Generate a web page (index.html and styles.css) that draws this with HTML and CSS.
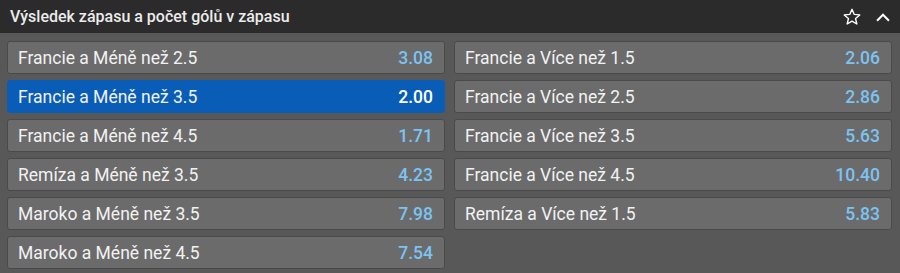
FILE: index.html
```html
<!DOCTYPE html>
<html lang="cs">
<head>
  <meta charset="UTF-8">
  <title>Výsledek zápasu a počet gólů v zápasu</title>
  <link rel="stylesheet" href="styles.css">
</head>
<body>
  <div class="market">
    <div class="market-header">
      <span class="market-title">Výsledek zápasu a počet gólů v zápasu</span>
      <div class="market-icons">
        <svg class="icon" width="20" height="20" viewBox="0 0 24 24">
          <path d="M12 2.8l2.7 6.1 6.6.6-5 4.4 1.5 6.5L12 17l-5.8 3.4 1.5-6.5-5-4.4 6.6-.6z" fill="none" stroke="#fff" stroke-width="1.7" stroke-linejoin="round"/>
        </svg>
        <svg class="icon" width="18" height="18" viewBox="0 0 24 24">
          <path d="M5 16l7-7 7 7" fill="none" stroke="#fff" stroke-width="2.6" stroke-linecap="square"/>
        </svg>
      </div>
    </div>

    <div class="market-body">
      <div class="odds-column">
        <div class="odd"><span class="odd-name">Francie a Méně než 2.5</span><span class="odd-value">3.08</span></div>
        <div class="odd selected"><span class="odd-name">Francie a Méně než 3.5</span><span class="odd-value">2.00</span></div>
        <div class="odd"><span class="odd-name">Francie a Méně než 4.5</span><span class="odd-value">1.71</span></div>
        <div class="odd"><span class="odd-name">Remíza a Méně než 3.5</span><span class="odd-value">4.23</span></div>
        <div class="odd"><span class="odd-name">Maroko a Méně než 3.5</span><span class="odd-value">7.98</span></div>
        <div class="odd"><span class="odd-name">Maroko a Méně než 4.5</span><span class="odd-value">7.54</span></div>
      </div>
      <div class="odds-column">
        <div class="odd"><span class="odd-name">Francie a Více než 1.5</span><span class="odd-value">2.06</span></div>
        <div class="odd"><span class="odd-name">Francie a Více než 2.5</span><span class="odd-value">2.86</span></div>
        <div class="odd"><span class="odd-name">Francie a Více než 3.5</span><span class="odd-value">5.63</span></div>
        <div class="odd"><span class="odd-name">Francie a Více než 4.5</span><span class="odd-value">10.40</span></div>
        <div class="odd"><span class="odd-name">Remíza a Více než 1.5</span><span class="odd-value">5.83</span></div>
      </div>
    </div>
  </div>
</body>
</html>
```

FILE: styles.css
```css
/* General */
body {
  margin: 0;
  font-family: Roboto, 'Liberation Sans', sans-serif;
  background-color: #585858;
  color: #f0f0f0;
}

/* Header */
.market-header {
  display: flex;
  align-items: center;
  justify-content: space-between;
  height: 33px;
  padding: 0 10px;
  background-color: #2b2b2b;
}

.market-title {
  font-size: 16px;
  font-weight: 500;
  color: #ececec;
}

.market-icons {
  display: flex;
  align-items: center;
  gap: 12px;
  margin-right: -2px;
}

.icon {
  display: block;
}

/* Odds grid */
.market-body {
  display: flex;
  gap: 9px;
  padding: 8px 8px 5px 7px;
}

.odds-column {
  flex: 1;
  display: flex;
  flex-direction: column;
  gap: 6px;
}

.odd {
  display: flex;
  align-items: center;
  justify-content: space-between;
  height: 31px;
  padding: 0 11px 0 10px;
  background-color: #6b6b6b;
  border: 1px solid #4a4a4a;
  border-radius: 3px;
  font-size: 17.5px;
}

.odd-name {
  color: #f2f2f2;
}

.odd-value {
  color: #7cc3f2;
  font-weight: 500;
}

.odd.selected {
  background-color: #0a5db6;
  border-color: #0a5db6;
}

.odd.selected .odd-value {
  color: #ffffff;
}
```
